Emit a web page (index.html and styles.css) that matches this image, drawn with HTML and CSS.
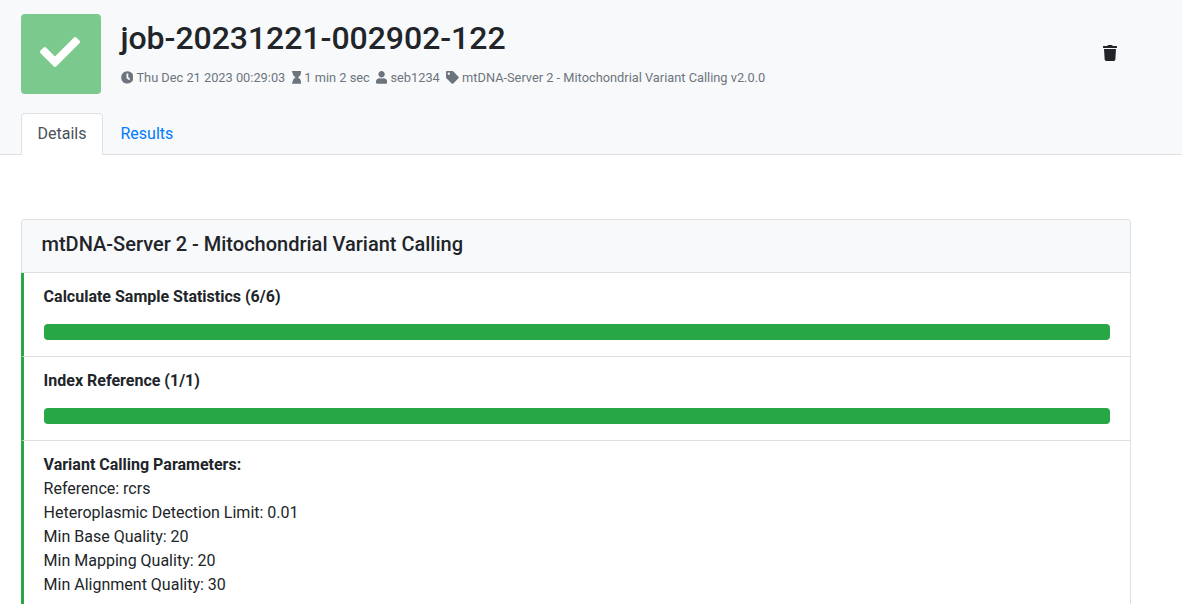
FILE: index.html
```html
<!DOCTYPE html>
<html lang="en">
<head>
<meta charset="utf-8">
<title>job-20231221-002902-122</title>
<link rel="stylesheet" href="styles.css">
</head>
<body>
<header class="page-header">
  <div class="job">
    <div class="status"><svg viewBox="0 0 512 512"><path d="M173.898 439.404l-166.4-166.4c-9.997-9.997-9.997-26.206 0-36.204l36.203-36.204c9.997-9.998 26.207-9.998 36.204 0L192 312.690 432.095 72.596c9.997-9.997 26.207-9.997 36.204 0l36.203 36.204c9.997 9.997 9.997 26.206 0 36.204l-294.400 294.401c-9.998 9.997-26.207 9.997-36.204-.001z"/></svg></div>
    <div class="summary">
      <h2 class="job-name">job-20231221-002902-122</h2>
      <div class="meta">
        <span><svg class="icon" viewBox="0 0 512 512"><path d="M256 8C119 8 8 119 8 256s111 248 248 248 248-111 248-248S393 8 256 8zm57.100 350.100L224.900 294c-3.100-2.300-4.900-5.900-4.900-9.700V116c0-6.600 5.400-12 12-12h48c6.600 0 12 5.400 12 12v137.700l63.500 46.200c5.400 3.900 6.500 11.400 2.600 16.800l-28.200 38.800c-3.900 5.300-11.400 6.500-16.800 2.600z"/></svg> Thu Dec 21 2023 00:29:03</span>
        <span><svg class="icon narrow" viewBox="0 0 384 512"><path d="M360 64c13.255 0 24-10.745 24-24V24c0-13.255-10.745-24-24-24H24C10.745 0 0 10.745 0 24v16c0 13.255 10.745 24 24 24 0 90.965 51.016 167.734 120.842 192C75.016 280.266 24 357.035 24 448c-13.255 0-24 10.745-24 24v16c0 13.255 10.745 24 24 24h336c13.255 0 24-10.745 24-24v-16c0-13.255-10.745-24-24-24 0-90.965-51.016-167.734-120.842-192C308.984 231.734 360 154.965 360 64z"/></svg> 1 min 2 sec</span>
        <span><svg class="icon person" viewBox="0 0 448 512"><path d="M224 256c70.700 0 128-57.300 128-128S294.700 0 224 0 96 57.300 96 128s57.300 128 128 128zm89.600 32h-16.700c-22.200 10.200-46.900 16-72.900 16s-50.600-5.800-72.900-16h-16.700C60.200 288 0 348.200 0 422.400V464c0 26.500 21.500 48 48 48h352c26.500 0 48-21.500 48-48v-41.600c0-74.200-60.200-134.400-134.400-134.400z"/></svg> seb1234</span>
        <span><svg class="icon" viewBox="0 0 512 512"><path d="M0 252.118V48C0 21.490 21.490 0 48 0h204.118a48 48 0 0 1 33.941 14.059l211.882 211.882c18.745 18.745 18.745 49.137 0 67.882L293.823 497.941c-18.745 18.745-49.137 18.745-67.882 0L14.059 286.059A48 48 0 0 1 0 252.118zM112 64c-26.510 0-48 21.490-48 48s21.490 48 48 48 48-21.490 48-48-21.490-48-48-48z"/></svg> mtDNA-Server 2 - Mitochondrial Variant Calling v2.0.0</span>
      </div>
    </div>
    <div class="remove"><svg viewBox="0 0 448 512"><path d="M432 32H312l-9.400-18.700A24 24 0 0 0 281.100 0H166.800a23.720 23.720 0 0 0-21.400 13.300L136 32H16A16 16 0 0 0 0 48v32a16 16 0 0 0 16 16h416a16 16 0 0 0 16-16V48a16 16 0 0 0-16-16zM32 128l21.200 339a48 48 0 0 0 47.900 45h245.800a48 48 0 0 0 47.900-45L416 128z"/></svg></div>
  </div>
  <nav class="tabs"><a class="tab active">Details</a><a class="tab">Results</a></nav>
</header>
<main class="card">
  <h5 class="card-header">mtDNA-Server 2 - Mitochondrial Variant Calling</h5>
  <section class="step"><strong>Calculate Sample Statistics (6/6)</strong><div class="progress"></div></section>
  <section class="step"><strong>Index Reference (1/1)</strong><div class="progress"></div></section>
  <section class="step last"><strong>Variant Calling Parameters:</strong><br>Reference: rcrs<br>Heteroplasmic Detection Limit: 0.01<br>Min Base Quality: 20<br>Min Mapping Quality: 20<br>Min Alignment Quality: 30<br></section>
</main>
</body>
</html>
```
FILE: styles.css
```css
* { box-sizing: border-box; }
body { margin: 0; font: 400 16px/24px Roboto, sans-serif; color: #212529; background: #fff; }
svg { display: block; fill: currentColor; }
.page-header { height: 155px; padding: 14px 21px 0 20.5px; background: #f8f9fb; border-bottom: 1px solid #dee2e6; }
.job { display: flex; height: 99px; }
.status { display: flex; align-items: center; justify-content: center; width: 80px; height: 80px; background: #7bc98d; color: #fff; border-radius: 4px; }
.status svg { width: 40px; height: 40px; margin: -4px 1px 0 0; }
.summary { flex: 1; padding: 5px 0 0 20px; }
.job-name { margin: 0 0 8.5px; font-size: 32px; line-height: 38px; font-weight: 500; letter-spacing: -0.04px; }
.meta { display: flex; gap: 6.34px; font-size: 12.8px; line-height: 24px; color: #6c757d; white-space: nowrap; }
.meta span { display: flex; align-items: center; gap: 3.17px; }
.icon { width: 12.8px; height: 12.8px; }
.icon.narrow { width: 9.6px; }
.icon.person { width: 11.2px; }
.remove { padding: 31px 44px 0 0; }
.remove svg { width: 14px; height: 16px; }
.tabs { display: flex; }
.tab { padding: 8px 16px; height: 42px; border: 1px solid transparent; border-bottom: 0; color: #007bff; }
.tab.active { background: #fff; color: #495057; border-color: #dee2e6; border-radius: 4px 4px 0 0; }
.card { display: flex; flex-direction: column; width: 1110px; height: 385px; margin: 64px 0 0 21px; border: 1px solid #dfdfdf; border-bottom: 0; border-radius: 4px 4px 0 0; }
.card-header { margin: 0; height: 53px; padding: 12px 19.5px; font-size: 20px; line-height: 24px; font-weight: 500; background: #f8f9fb; border-bottom: 1px solid #dfdfdf; border-radius: 3px 3px 0 0; }
.step { margin-left: -1px; padding: 12px 20px 16px 19.6px; border-left: 3px solid #28a745; border-bottom: 1px solid #dfdfdf; }
.step.last { flex: 1; padding-bottom: 0; border-bottom: 0; }
.step strong { font-weight: 700; }
.progress { height: 16px; margin-top: 15px; background: #28a745; border-radius: 4px; }
```
